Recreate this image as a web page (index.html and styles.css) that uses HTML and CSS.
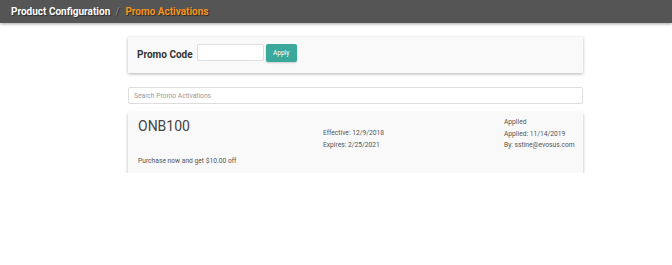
FILE: index.html
```html
<!DOCTYPE html>
<html lang="en">
<head>
    <meta charset="UTF-8">
    <title>Promo Activations</title>
    <link rel="stylesheet" href="styles.css">
</head>
<body>
    <div class="topbar">
        <span class="crumb">Product Configuration</span>
        <span class="sep">/</span>
        <span class="crumb current">Promo Activations</span>
    </div>

    <div class="main">
        <div class="panel promo-form">
            <label class="promo-label">Promo Code</label>
            <input type="text" class="promo-input">
            <button class="apply-btn">Apply</button>
        </div>

        <input type="text" class="search" placeholder="Search Promo Activations">

        <div class="panel activation">
            <div class="col-code">
                <div class="code">ONB100</div>
                <div class="desc">Purchase now and get $10.00 off</div>
            </div>
            <div class="col-dates">
                <div>Effective: 12/9/2018</div>
                <div>Expires: 2/25/2021</div>
            </div>
            <div class="col-status">
                <div>Applied</div>
                <div>Applied: 11/14/2019</div>
                <div>By: sstine@evosus.com</div>
            </div>
        </div>
    </div>
</body>
</html>
```

FILE: styles.css
```css
body {
    margin: 0;
    font-family: Roboto, "Liberation Sans", sans-serif;
    background: #fff;
    color: #444;
}
.topbar {
    height: 23px;
    background: #555;
    box-shadow: 0 1px 3px rgba(0,0,0,0.35);
    display: flex;
    align-items: center;
    padding-left: 11px;
    font-size: 10px;
    font-weight: bold;
    color: #fff;
    text-shadow: 1px 1px 1px rgba(0,0,0,0.5);
}
.sep {
    color: #888;
    font-weight: normal;
    margin: 0 6px 0 5px;
}
.current {
    color: #f7941d;
}
.main {
    width: 455px;
    margin: 14px 0 0 128px;
}
.panel {
    background: #f9f9f9;
    box-shadow: 0 1px 3px rgba(0,0,0,0.3);
}
.promo-form {
    height: 36px;
    box-sizing: border-box;
    display: flex;
    align-items: flex-start;
    padding: 7px 0 0 9px;
}
.promo-label {
    font-size: 10px;
    font-weight: bold;
    color: #333;
    margin: 5px 4px 0 0;
}
.promo-input {
    width: 67px;
    height: 17px;
    box-sizing: border-box;
    border: 1px solid #ddd;
    border-radius: 2px;
    padding: 0;
    margin: 0 2px 0 0;
    background: #fff;
}
.apply-btn {
    width: 31px;
    height: 18px;
    border: none;
    border-radius: 2px;
    background: #3aa89b;
    color: #fff;
    font-family: Roboto, "Liberation Sans", sans-serif;
    font-size: 6.5px;
    padding: 0;
    box-shadow: 0 1px 2px rgba(0,0,0,0.2);
}
.search {
    display: block;
    box-sizing: border-box;
    width: 455px;
    height: 17px;
    margin: 14px 0 8px;
    border: 1px solid #ddd;
    border-radius: 2px;
    padding: 0 5px;
    font-family: Roboto, "Liberation Sans", sans-serif;
    font-size: 6.7px;
    background: #fff;
}
.search::placeholder {
    color: #999;
}
.activation {
    height: 61px;
    box-sizing: border-box;
    display: grid;
    grid-template-columns: 185px 181px 1fr;
    padding: 5px 10px 0;
    font-size: 6.7px;
    line-height: 11.5px;
    color: #555;
    white-space: nowrap;
    box-shadow: 0 2px 3px rgba(0,0,0,0.3);
}
.code {
    font-size: 14px;
    line-height: 17px;
    color: #444;
    margin-top: 1px;
}
.desc {
    margin-top: 21px;
}
.col-dates {
    padding-top: 11px;
}
```
